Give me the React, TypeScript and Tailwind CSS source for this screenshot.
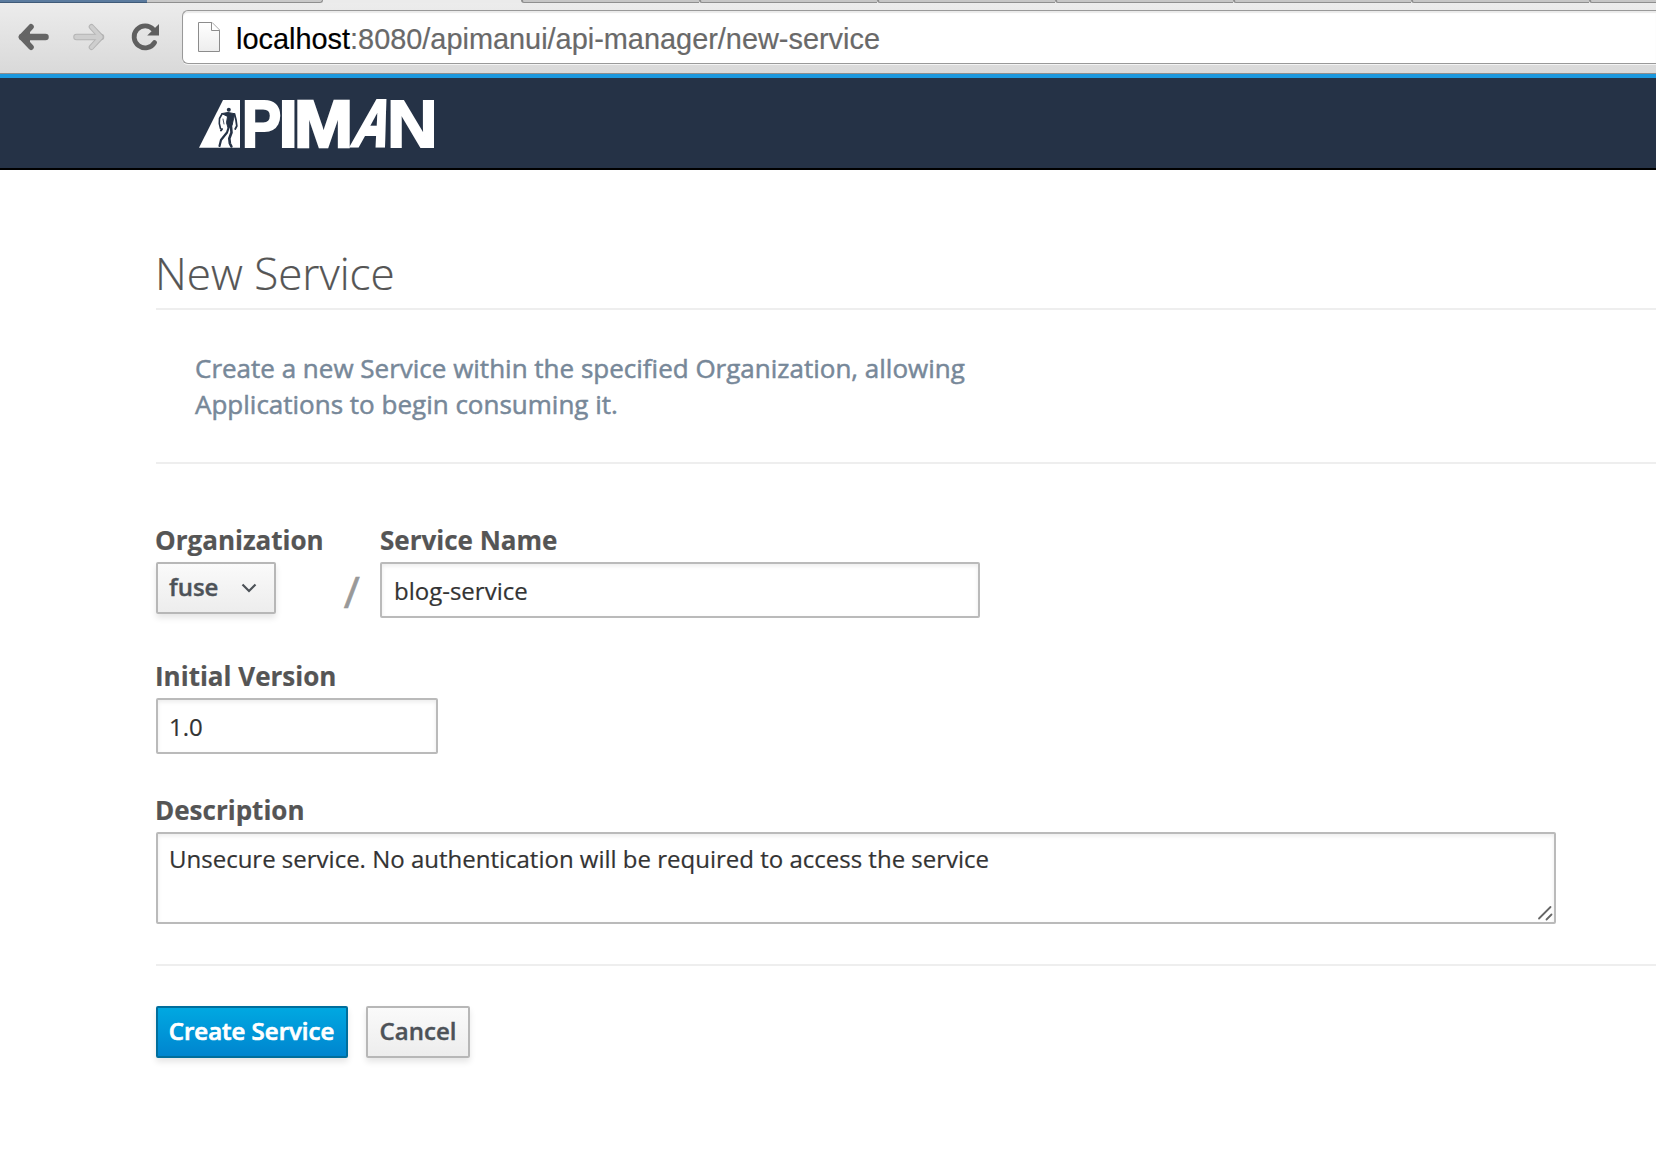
import React from "react";

const inputBase =
  "block rounded-[2px] border-2 border-[#bababa] bg-white text-[24px] text-[#333333] shadow-[inset_0_2px_4px_rgba(0,0,0,0.08)] outline-none [-webkit-text-stroke:0.2px]";

const labelBase = "block h-[36px] text-[26px] leading-[36px] font-bold text-[#555555] [-webkit-text-stroke:0.2px]";

const buttonBase =
  "flex h-[52px] items-center rounded-[2px] border-2 text-[24px] leading-[48px] shadow-[0_4px_6px_rgba(3,3,3,0.10)] [-webkit-text-stroke:0.4px]";

function TabStrip() {
  return (
    <div className="flex h-[3px] w-full overflow-hidden">
      <div className="w-[147px] shrink-0 border-b border-[#3f5a78] bg-[#5b7b9e]" />
      <div className="w-[176px] shrink-0 rounded-br-[4px] border-r border-b border-[#8f8f8f] bg-[#c9c9c9]" />
      <div className="w-[198px] shrink-0 bg-[#ebebeb]" />
      {[0, 1, 2, 3, 4, 5, 6].map((tab) => (
        <div
          key={tab}
          className="w-[178px] shrink-0 rounded-bl-[4px] border-b border-l-2 border-[#8f8f8f] bg-[#c6c6c6]"
        />
      ))}
    </div>
  );
}

function BackIcon() {
  return (
    <svg width="32" height="28" viewBox="0 0 32 28" fill="none" stroke="#656565" strokeLinecap="round" strokeLinejoin="round">
      <path d="M5 14H28.500" strokeWidth="6.5" />
      <path d="M14 3.8 4.500 14l9.5 10.2" strokeWidth="5.6" />
      <path d="M6 14l6-6v12z" fill="#656565" strokeWidth="2" />
    </svg>
  );
}

function ForwardIcon() {
  return (
    <svg width="32" height="28" viewBox="0 0 32 28" fill="none" strokeLinecap="round" strokeLinejoin="round">
      <g stroke="#b5b5b5">
        <path d="M3.500 14H28" strokeWidth="6.5" />
        <path d="M18.5 3.8 28 14l-9.5 10.2" strokeWidth="5.6" />
      </g>
      <g stroke="#cecece">
        <path d="M3.500 14H27" strokeWidth="4.5" />
        <path d="M18.5 3.8 27.8 14l-9.3 10.2" strokeWidth="3.6" />
      </g>
    </svg>
  );
}

function ReloadIcon() {
  return (
    <svg width="30" height="30" viewBox="0 0 30 30" fill="none">
      <path d="M23.6 20.5A11 11 0 1 1 22.4 7.6" stroke="#5f5f5f" strokeWidth="4.800" strokeLinecap="round" />
      <path d="M28 2v11.5H16.2z" fill="#5f5f5f" />
    </svg>
  );
}

function PageIcon() {
  return (
    <svg width="24" height="32" viewBox="0 0 24 32">
      <defs>
        <linearGradient id="sheet" x1="0" y1="0" x2="0" y2="1">
          <stop offset="0" stopColor="#ffffff" />
          <stop offset="1" stopColor="#ededed" />
        </linearGradient>
      </defs>
      <path d="M1.5 1.5H15L22.5 9v21.500h-21z" fill="url(#sheet)" stroke="#8c8c8c" />
      <path d="M14.5 1.5V9.5h8" fill="#fff" stroke="#8c8c8c" />
    </svg>
  );
}

function BrowserBar() {
  return (
    <div className="h-[74px] w-full border-b border-[#8d8d8d] bg-linear-to-b from-[#ededed] to-[#d9d9d9] font-['Liberation_Sans',sans-serif]">
      <TabStrip />
      <div className="flex pt-[7px] pl-[17px]">
        <div className="mt-[13px] flex">
          <BackIcon />
        </div>
        <div className="mt-[13px] ml-[24px] flex">
          <ForwardIcon />
        </div>
        <div className="mt-[12px] ml-[26px] flex">
          <ReloadIcon />
        </div>
        <div className="ml-[21px] flex h-[54px] flex-1 items-center rounded-l-[6px] border border-r-0 border-[#999999] bg-white pl-[14px] shadow-[inset_0_2px_1px_rgba(0,0,0,0.08),0_1px_0_#f4f4f4]">
          <PageIcon />
          <div className="mt-[3px] ml-[15px] text-[28.900px] leading-[50px] whitespace-nowrap text-[#696969] [-webkit-text-stroke:0.2px]">
            <span className="text-black">localhost</span>:8080/apimanui/api-manager/new-service
          </div>
        </div>
      </div>
    </div>
  );
}

function Logo() {
  return (
    <svg
      width="250"
      height="90"
      viewBox="197 78 250 90"
      className="font-['Liberation_Sans',sans-serif] font-bold"
      fill="#ffffff"
      fontSize="67.5"
      stroke="#ffffff"
      strokeWidth="2"
    >
      <path d="M223 100h17v47.7h-41z" stroke="none" />
      <g fill="none" stroke="#253246" strokeLinecap="round" strokeLinejoin="round">
        <circle cx="228.8" cy="109.800" r="2" fill="#253246" stroke="none" />
        <path d="M222 113.5l6-1 6.500 1.2-1 5-1.500 7-4 2-1.500-5 1-6z" fill="#253246" strokeWidth="1" />
        <path d="M222 114l-2.500 4.5-.2 5 1.2 5" strokeWidth="1.6" />
        <path d="M221 130.5l1-1.500" strokeWidth="2" />
        <path d="M234.5 114l1.500 6 .8 6-1.6 3" strokeWidth="1.8" />
        <path d="M229 126.500l-2 6-6 7.5-1.500 6" strokeWidth="2.2" />
        <path d="M231 126.500l.5 6-2.200 6 .6 5 1.500 3" strokeWidth="2.600" />
        <path d="M223 119l1 5" strokeWidth="0.8" />
      </g>
      <text transform="translate(241.800 146.900) scale(.88 1)">P</text>
      <text transform="translate(278.300 146.900) scale(1.060 1)">I</text>
      <text transform="translate(294 146.900) scale(1.050 1)" strokeWidth="2.600">M</text>
      <text transform="translate(350 146.400) skewX(-16.500) scale(.72 .98)" strokeWidth="3.200">
        A
      </text>
      <text transform="translate(387 146.900) scale(1.040 1)">N</text>
    </svg>
  );
}

export default function App() {
  return (
    <div className="h-[1168px] w-full overflow-hidden bg-white font-['Open_Sans',sans-serif]">
      <BrowserBar />
      <header className="flex h-[96px] items-start border-t-[4px] border-b-2 border-t-[#1b98de] border-b-black bg-[#253246] pl-[197px]">
        <Logo />
      </header>

      <main className="pl-[156px]">
        <h1 className="h-[140px] border-b-2 border-[#eeeeee] pt-[73px] text-[44px] leading-[60px] font-light text-[#555555] [-webkit-text-stroke:0.2px]">
          <span className="-ml-px">New Service</span>
        </h1>
        <p className="h-[154px] border-b-2 border-[#eeeeee] pt-[40px] pl-[39px] text-[26px] leading-[36px] text-[#778899] [-webkit-text-stroke:0.5px]">
          Create a new Service within the specified Organization, allowing
          <br />
          Applications to begin consuming it.
        </p>

        <form className="pt-[58px]" onSubmit={(e) => e.preventDefault()}>
          <div className="flex">
            <div className="w-[224px]">
              <label className={`${labelBase} -ml-px`}>Organization</label>
              <div className="mt-[4px] flex justify-between">
                <button
                  type="button"
                  className={`${buttonBase} w-[120px] justify-between border-[#b7b7b7] bg-linear-to-b from-[#fafafa] to-[#ededed] pr-[17px] pl-[11px] font-semibold text-[#4d5258]`}
                >
                  <span className="-mt-[2px]">fuse</span>
                  <svg width="16" height="10" viewBox="0 0 16 10" fill="none" stroke="#4d5258" strokeWidth="2.200">
                    <path d="M1.500 1.500 8 8l6.500-6.500" />
                  </svg>
                </button>
                <span className="mt-[3px] mr-[20px] text-[44px] leading-[52px] text-[#999999] [-webkit-text-stroke:0.7px]">/</span>
              </div>
            </div>
            <div>
              <label className={labelBase}>Service Name</label>
              <input className={`${inputBase} mt-[4px] h-[56px] w-[600px] px-[12px]`} defaultValue="blog-service" />
            </div>
          </div>

          <div className="mt-[40px]">
            <label className={`${labelBase} -ml-px`}>Initial Version</label>
            <input className={`${inputBase} mt-[4px] h-[56px] w-[282px] px-[11px]`} defaultValue="1.0" />
          </div>

          <div className="mt-[38px]">
            <label className={`${labelBase} -ml-px`}>Description</label>
            <div className={`${inputBase} mt-[4px] flex h-[92px] w-[1400px] items-end justify-between pr-[1px] pb-[1px] pl-[11px]`}>
              <p className="self-start pt-[7px] leading-[36px] whitespace-nowrap">
                Unsecure service. No authentication will be required to access the service
              </p>
              <svg width="16" height="16" viewBox="0 0 16 16" stroke="#666666" strokeWidth="1.800" strokeLinecap="round">
                <path d="M2 13.500 13.500 2M9.500 14.500 14.500 9.500" />
              </svg>
            </div>
          </div>

          <div className="mt-[40px] flex gap-[18px] border-t-2 border-[#eeeeee] pt-[40px]">
            <button
              type="submit"
              className={`${buttonBase} w-[192px] justify-center border-[#006e9c] bg-linear-to-b from-[#00a8e1] to-[#0085cf] font-semibold text-white [-webkit-text-stroke:0.7px]`}
            >
              <span className="-mt-[2px] -ml-px whitespace-nowrap">Create Service</span>
            </button>
            <button
              type="button"
              className={`${buttonBase} w-[104px] justify-center border-[#b7b7b7] bg-linear-to-b from-[#fafafa] to-[#ededed] font-semibold text-[#4d5258]`}
            >
              <span className="-mt-[2px]">Cancel</span>
            </button>
          </div>
        </form>
      </main>
    </div>
  );
}
